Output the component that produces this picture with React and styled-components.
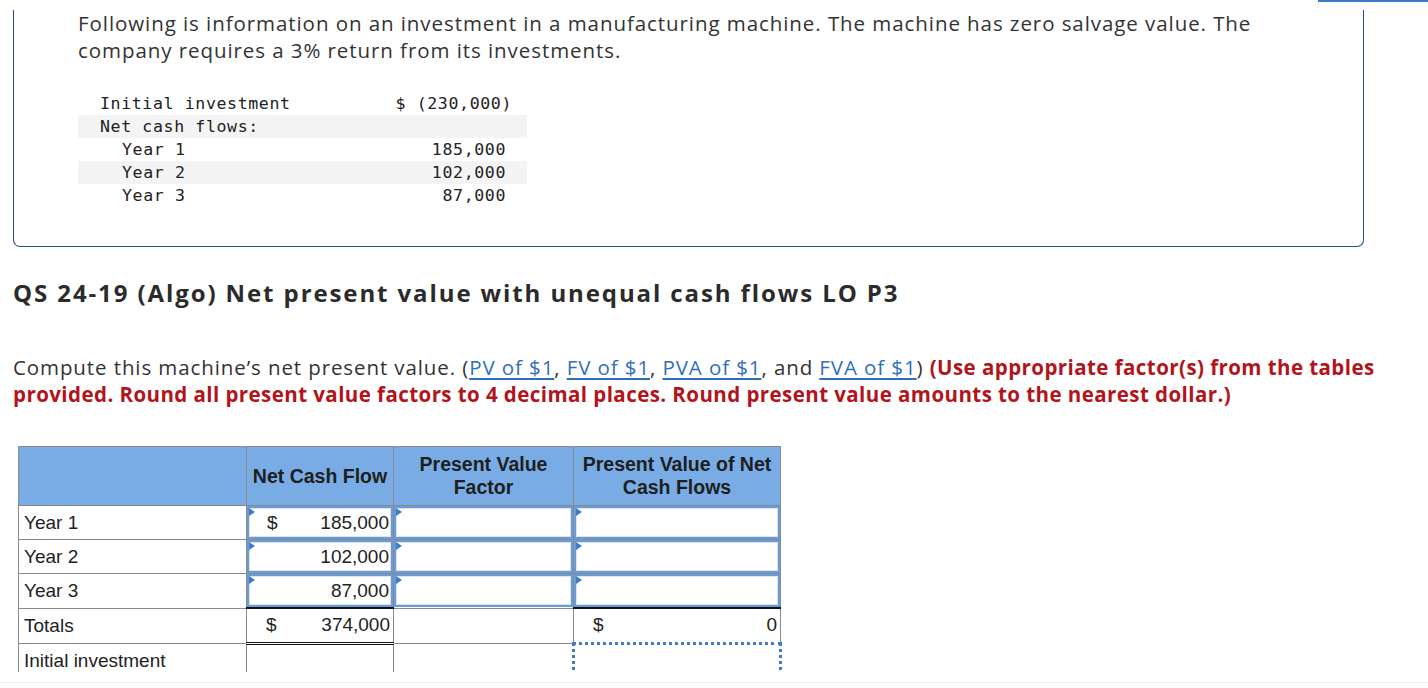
import React from "react";
import styled, { createGlobalStyle } from "styled-components";

const GlobalStyle = createGlobalStyle`
  html, body {
    margin: 0;
    padding: 0;
    background: #fff;
  }
  body {
    font-family: "Open Sans", "Lato", sans-serif;
    color: #2b2b2b;
  }
`;

const Page = styled.div`
  position: relative;
  width: 1428px;
  height: 688px;
  overflow: hidden;
`;

const TopCover = styled.div`
  position: absolute;
  top: 0;
  left: 0;
  right: 0;
  height: 13px;
  display: flex;
  justify-content: flex-end;
  align-items: flex-start;
  z-index: 2;
  pointer-events: none;

  span {
    display: block;
    width: 110px;
    height: 2px;
    background: #3b7bc8;
  }
`;

const InfoBox = styled.div`
  margin-left: 13px;
  width: 1351px;
  border: 1px solid #1d4f8c;
  border-top: none;
  border-radius: 0 0 7px 7px;
  padding: 0 0 39px 64px;
  box-sizing: border-box;
`;

const Lead = styled.p`
  margin: 10px 0 0;
  width: 1200px;
  font-size: 20.5px;
  line-height: 27px;
  letter-spacing: 0.93px;
  color: #333;
`;

const GivenTable = styled.div`
  margin-top: 28px;
  width: 449px;
  font-family: "DejaVu Sans Mono", "Liberation Mono", monospace;
  font-size: 16.6px;
  letter-spacing: 0.6px;
  color: #222;
`;

const GivenRow = styled.div`
  display: flex;
  justify-content: space-between;
  height: 23px;
  line-height: 23px;
  padding: 0 ${({ $hang }) => ($hang ? 15 : 21)}px 0 ${({ $indent }) => ($indent ? 44 : 22)}px;
  background: ${({ $shade }) => ($shade ? "#f4f4f4" : "transparent")};
  white-space: pre;
`;

const Title = styled.h2`
  margin: 31px 0 0 13px;
  font-size: 24px;
  line-height: 30px;
  font-weight: 700;
  letter-spacing: 1.9px;
  color: #2b2b2b;
`;

const Instructions = styled.p`
  margin: 46px 0 0 13px;
  width: 1400px;
  font-size: 20.5px;
  line-height: 27px;
  letter-spacing: 0.9px;
  color: #333;
`;

const Ref = styled.a`
  color: #2f6fba;
  text-decoration: underline;
  text-underline-offset: 3px;
`;

const Warn = styled.span`
  color: #b3131a;
  font-weight: 700;
  letter-spacing: 0.43px;
`;

const TableClip = styled.div`
  margin: 38px 0 0 18px;
  height: 226px;
  overflow: hidden;
`;

const Grid = styled.table`
  border-collapse: collapse;
  table-layout: fixed;
  width: 762px;
  font-family: "Liberation Sans", Arial, sans-serif;
  font-size: 19px;
  color: #222;
`;

const HeadCell = styled.th`
  background: #79ace5;
  border: 1px solid #8a8a8a;
  height: 58px;
  padding: 0 2px;
  font-weight: 700;
  font-size: 19.5px;
  line-height: 23px;
  text-align: center;
  vertical-align: middle;
  color: #1e1e1e;
`;

const LabelCell = styled.td`
  border: 1px solid #8a8a8a;
  height: ${({ $tall }) => ($tall ? 34 : 33)}px;
  padding: 0 0 0 5px;
  vertical-align: middle;
  line-height: 22px;
`;

const Cell = styled.td`
  position: relative;
  border: 1px solid #8a8a8a;
  border-top: ${({ $sum }) => ($sum ? "2px solid #111" : "1px solid #8a8a8a")};
  border-bottom: ${({ $double, $open }) =>
    $double ? "3px double #111" : $open ? "none" : "1px solid #8a8a8a"};
  padding: 0;
  vertical-align: middle;
`;

const InputBox = styled.div`
  position: relative;
  height: 33px;
  box-sizing: border-box;
  border: 2px solid #6b9bd7;
  box-shadow: inset 0 0 0 1px #d6e4f5;
  background: #fff;
  display: flex;
  align-items: center;
  justify-content: space-between;
  padding: 0 2px 0 18px;

  &::before {
    content: "";
    position: absolute;
    top: 0;
    left: 0;
    border-top: 4px solid transparent;
    border-bottom: 4px solid transparent;
    border-left: 6px solid #3d7ccb;
  }
`;

const Amount = styled.div`
  display: flex;
  justify-content: space-between;
  align-items: center;
  padding: 0 3px 0 ${({ $pad }) => $pad || 19}px;
  line-height: 22px;
`;

const Dollar = styled.span`
  min-width: 10px;
`;

const FocusCell = styled.td`
  padding: 0;
  border-top: 3px dotted #3d7ccb;
  border-left: 3px dotted #3d7ccb;
  border-right: 3px dotted #3d7ccb;
  border-bottom: none;
`;

const Footer = styled.div`
  margin-top: 10px;
  height: 1px;
  background: #ececec;
`;

const given = [
  { label: "Initial investment", value: "$ (230,000)", hang: true },
  { label: "Net cash flows:", value: "", shade: true },
  { label: "Year 1", value: "185,000", indent: true },
  { label: "Year 2", value: "102,000", indent: true, shade: true },
  { label: "Year 3", value: " 87,000", indent: true },
];

const years = [
  { label: "Year 1", cash: "185,000", dollar: true },
  { label: "Year 2", cash: "102,000" },
  { label: "Year 3", cash: "87,000" },
];

export default function App() {
  return (
    <>
      <GlobalStyle />
      <Page>
        <TopCover>
          <span />
        </TopCover>
        <InfoBox>
          <Lead>
            Following is information on an investment in a manufacturing machine. The machine
            has zero salvage value. The company requires a 3% return from its investments.
          </Lead>
          <GivenTable>
            {given.map((g) => (
              <GivenRow key={g.label} $indent={g.indent} $shade={g.shade} $hang={g.hang}>
                <span>{g.label}</span>
                <span>{g.value}</span>
              </GivenRow>
            ))}
          </GivenTable>
        </InfoBox>

        <Title>QS 24-19 (Algo) Net present value with unequal cash flows LO P3</Title>

        <Instructions>
          Compute this machine’s net present value. (<Ref>PV of $1</Ref>, <Ref>FV of $1</Ref>,{" "}
          <Ref>PVA of $1</Ref>, and <Ref>FVA of $1</Ref>){" "}
          <Warn>
            (Use appropriate factor(s) from the tables provided. Round all present value factors
            to 4 decimal places. Round present value amounts to the nearest dollar.)
          </Warn>
        </Instructions>

        <TableClip>
          <Grid>
            <colgroup>
              <col style={{ width: 228 }} />
              <col style={{ width: 147 }} />
              <col style={{ width: 180 }} />
              <col style={{ width: 207 }} />
            </colgroup>
            <thead>
              <tr>
                <HeadCell />
                <HeadCell>Net Cash Flow</HeadCell>
                <HeadCell>
                  Present Value
                  <br />
                  Factor
                </HeadCell>
                <HeadCell>
                  Present Value of Net
                  <br />
                  Cash Flows
                </HeadCell>
              </tr>
            </thead>
            <tbody>
              {years.map((y) => (
                <tr key={y.label}>
                  <LabelCell>{y.label}</LabelCell>
                  <Cell>
                    <InputBox>
                      <Dollar>{y.dollar ? "$" : ""}</Dollar>
                      <span>{y.cash}</span>
                    </InputBox>
                  </Cell>
                  <Cell>
                    <InputBox />
                  </Cell>
                  <Cell>
                    <InputBox />
                  </Cell>
                </tr>
              ))}
              <tr>
                <LabelCell $tall>Totals</LabelCell>
                <Cell $sum $double>
                  <Amount>
                    <Dollar>$</Dollar>
                    <span>374,000</span>
                  </Amount>
                </Cell>
                <Cell />
                <Cell $sum>
                  <Amount $pad={19}>
                    <Dollar>$</Dollar>
                    <span>0</span>
                  </Amount>
                </Cell>
              </tr>
              <tr>
                <LabelCell $tall>Initial investment</LabelCell>
                <Cell />
                <Cell $open />
                <FocusCell />
              </tr>
            </tbody>
          </Grid>
        </TableClip>
        <Footer />
      </Page>
    </>
  );
}
